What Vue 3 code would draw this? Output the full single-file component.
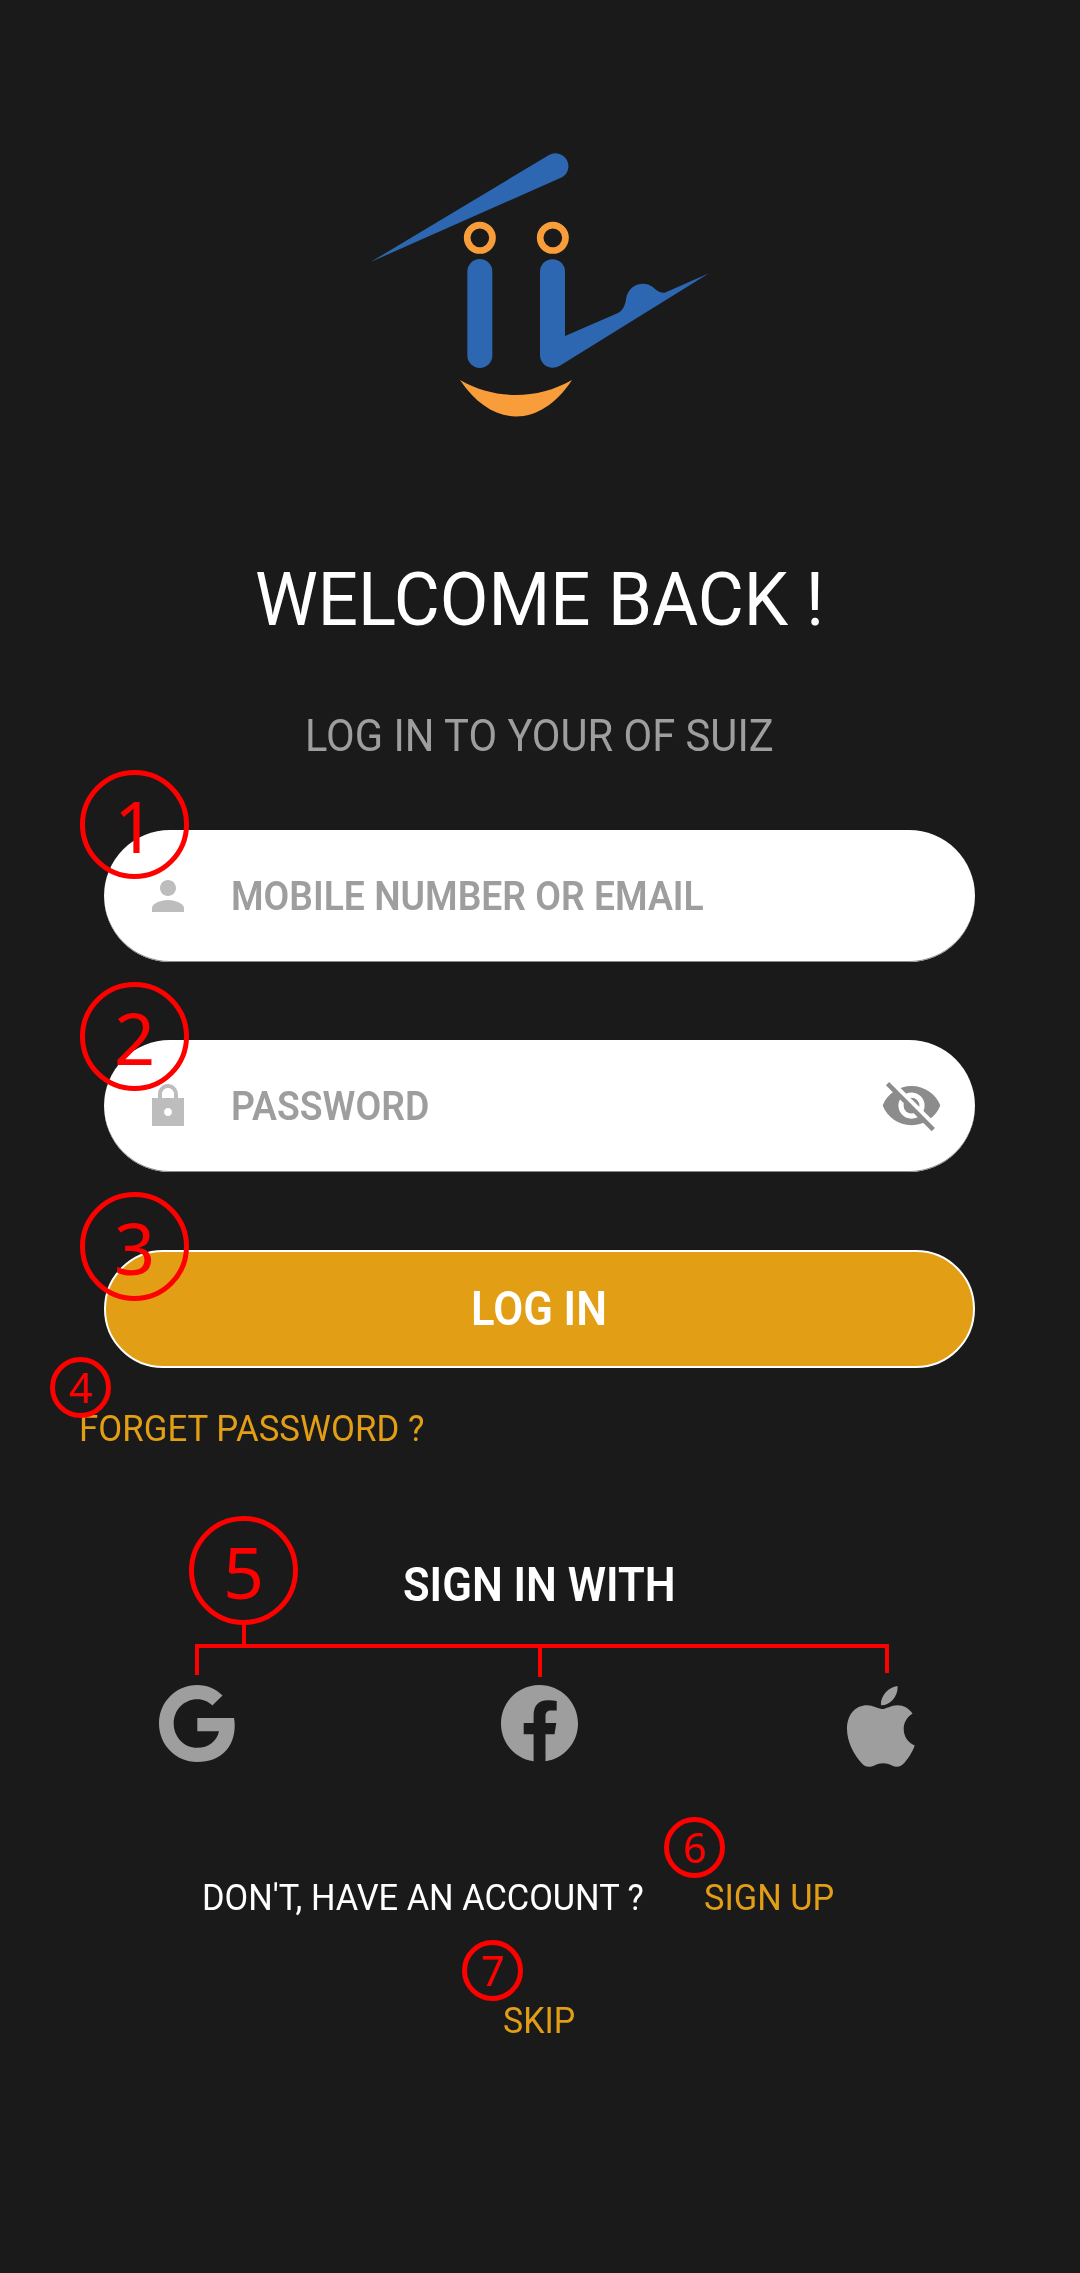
<script setup>
const fields = [
  { n: 1, label: 'MOBILE NUMBER OR EMAIL', icon: 'person', squeeze: 0.932, badge: 'top' },
  { n: 2, label: 'PASSWORD', icon: 'lock', squeeze: 0.934, badge: 'mid' },
]
const icons = {
  person: 'M12 12c2.21 0 4-1.79 4-4s-1.79-4-4-4-4 1.79-4 4 1.79 4 4 4zm0 2c-2.67 0-8 1.34-8 4v2h16v-2c0-2.66-5.33-4-8-4z',
  lock: 'M20 8h-3V6.21c0-2.61-1.91-4.94-4.51-5.19C9.51.74 7 3.08 7 6v2H4v14h16V8zm-8 9c-1.1 0-2-.9-2-2s.9-2 2-2 2 .9 2 2-.9 2-2 2zM9 8V6c0-1.66 1.34-3 3-3s3 1.34 3 3v2H9z',
}
</script>

<template>
  <main class="screen">
    <svg class="logo" viewBox="0 0 1140 930">
      <g fill="#2e67b1">
        <path d="M62 396 L597 75 A38.500 38.500 0 1 1 636 142 Z" />
        <rect x="352" y="387" width="75" height="327" rx="37.500" />
        <path d="M570 425 A37.500 37.500 0 0 1 645 425 V618 L804 549 C818 542 826 526 828 508 C832 478 854 461 880 461 C897 461 908 470 918 479 C926 486 936 489 944 488 L1077 430 L632 706 C604 724 570 706 570 676 Z" />
      </g>
      <g fill="none" stroke="#f99d3b" stroke-width="20">
        <circle cx="389.500" cy="323.500" r="38" />
        <circle cx="608.500" cy="323.500" r="38" />
      </g>
      <path fill="#f99d3b" d="M330 750 C435 810 560 810 666 750 C570 896 428 896 330 750 Z" />
    </svg>

    <h1 class="title"><span class="t">WELCOME BACK !</span></h1>
    <p class="subtitle"><span class="t">LOG IN TO YOUR OF SUIZ</span></p>

    <label v-for="f in fields" :key="f.n" class="field">
      <svg class="field-icon" viewBox="0 0 24 24"><path :d="icons[f.icon]" /></svg>
      <span class="t placeholder" :style="{ '--sx': f.squeeze }">{{ f.label }}</span>
      <svg v-if="f.icon === 'lock'" class="eye" viewBox="0 0 60 52">
        <mask id="eye-cut">
          <rect width="60" height="52" fill="#fff" />
          <path d="M4.500 -2.500 L54.500 47.500" stroke="#000" stroke-width="5" />
        </mask>
        <g mask="url(#eye-cut)">
          <path fill-rule="evenodd" d="M29.500 6 C16.400 6 5.200 14 0.700 25.500 C5.200 37 16.400 45.200 29.500 45.200 S53.800 37 58.300 25.500 C53.800 14 42.600 6 29.500 6 Z M29.500 12.500 A13.100 13.100 0 1 1 29.500 38.700 A13.100 13.100 0 1 1 29.500 12.500 Z" />
          <circle cx="29.500" cy="25.600" r="7.900" />
        </g>
        <path d="M5.500 3.700 L51.300 49.700" stroke="#8c8c8c" stroke-width="4.600" />
      </svg>
      <b class="badge" :class="f.badge">{{ f.n }}</b>
    </label>

    <button class="login">
      <span class="t">LOG IN</span>
      <b class="badge low">3</b>
    </button>

    <div class="forgot">
      <a class="t">FORGET PASSWORD ?</a>
      <b class="badge small">4</b>
    </div>

    <h2 class="signin"><span class="t">SIGN IN WITH</span></h2>

    <section class="socials">
      <svg class="google" viewBox="0 0 76 77">
        <path d="M63.500 10.500 L53.300 20.500 C49.500 16.800 44.500 14.300 38.300 14.300 C25 14.300 14.700 25 14.700 38.500 C14.700 52 25 62.800 38.300 62.800 C49.500 62.800 58 56 60 46.200 H38.300 V33 H75 C75.500 35.500 75.700 38 75.700 40.500 C75.700 62.500 61.500 77 38.300 77 C17 77 0 60 0 38.500 C0 17 17 0 38.300 0 C48 0 57 4 63.500 10.500 Z" />
      </svg>
      <svg class="facebook" viewBox="0 0 77 77">
        <path d="M32.600 76.300 V49.300 H22.700 V38 H32.600 V30.500 C32.600 20.500 37.500 15.200 46.500 15.200 C50 15.200 53 15.500 55.700 16 V25.500 H50.500 C46.300 25.500 44.500 27.500 44.500 31 V38 H55.300 L53.500 49.300 H44.500 V76.300 C63 73.500 77 57.800 77 38.500 C77 17.200 59.800 0 38.500 0 S0 17.200 0 38.500 C0 57.800 14 73.500 32.600 76.300 Z" />
      </svg>
      <svg class="apple" viewBox="0 0 68 81">
        <path d="M50.500 0 C51.500 9 44 19.500 34 19.300 C33 10.500 41.500 0.800 50.500 0 Z M65.500 27.500 C60 31 56.700 36.500 56.700 43 C56.700 50.500 61 56.500 67.700 59.500 C65.500 66 61 73 57 77.300 C53 81.500 49 81.500 45 79.500 C39 76.500 33 76.500 27.500 79.500 C22 82 18 81 14.500 77 C7 68.500 0 56 0 43 C0 28 9 19.300 20 19.300 C26 19.300 31 23 35 23 C39 23 44 19.200 50.500 19.200 C56.500 19.200 61.500 22 65.500 27.500 Z" />
      </svg>
      <svg class="bracket" viewBox="0 0 694 52">
        <path d="M2 50 V21 H692 V48 M345 21 V52 M49 0 V21" />
      </svg>
      <b class="badge five">5</b>
    </section>

    <div class="signup">
      <span class="t ask">DON'T, HAVE AN ACCOUNT ?</span>
      <a class="t join">SIGN UP</a>
      <b class="badge small">6</b>
    </div>

    <div class="skip">
      <a class="t">SKIP</a>
      <b class="badge small">7</b>
    </div>
  </main>
</template>

<style>
body {
  margin: 0;
  background: #1a1a1a;
}
</style>

<style scoped>
.screen {
  box-sizing: border-box;
  display: flex;
  flex-direction: column;
  width: 1080px;
  height: 2273px;
  padding-top: 130px;
  overflow: hidden;
  background: #1a1a1a;
  color: #fff;
  font-family: Roboto, 'Noto Sans', sans-serif;
}
h1, h2, p {
  margin: 0;
  font-weight: 400;
}
.t {
  display: inline-block;
  white-space: nowrap;
  transform: scaleX(var(--sx, 1));
  transform-origin: left center;
}
.logo {
  width: 380px;
  height: 310px;
  margin-left: 350px;
}
.title {
  --sx: 0.943;
  margin: 119px 0 0 255px;
  font-size: 75px;
  line-height: 80px;
}
.subtitle {
  --sx: 0.956;
  margin: 73px 0 0 305px;
  font-size: 43.600px;
  line-height: 50px;
  color: #9e9e9e;
}
.field {
  position: relative;
  display: flex;
  align-items: center;
  box-sizing: border-box;
  height: 132px;
  margin: 78px 105.400px 0 104.400px;
  padding: 0 33px 1px 39.600px;
  border-radius: 66px;
  background: #fff;
  box-shadow: inset 0 -1px 0 #8b8b8b;
}
.subtitle + .field {
  margin-top: 68px;
}
.field-icon {
  width: 48px;
  height: 48px;
  fill: #bdbdbd;
}
.placeholder {
  flex: 1;
  position: relative;
  top: 1px;
  margin-left: 38.800px;
  font-size: 40px;
  font-weight: 600;
  line-height: 48px;
  color: #9e9e9e;
}
.eye {
  width: 60px;
  height: 52px;
  overflow: visible;
  fill: #8c8c8c;
}
.login {
  --sx: 0.888;
  position: relative;
  display: flex;
  align-items: center;
  box-sizing: border-box;
  height: 118px;
  margin: 78px 105.400px 0 104.400px;
  padding: 0 0 0 364.900px;
  border: 2px solid #fff;
  border-radius: 60px;
  background: #e29e14;
  color: #fff;
  font: 600 49px/56px Roboto, sans-serif;
}
.forgot {
  --sx: 0.9545;
  position: relative;
  margin: 39px 0 0 79px;
  font-size: 36.500px;
  line-height: 44px;
  color: #e29e14;
}
.signin {
  --sx: 0.89;
  margin: 106px 0 0 402.500px;
  font-size: 49px;
  font-weight: 600;
  line-height: 56px;
}
.socials {
  position: relative;
  display: flex;
  justify-content: space-between;
  height: 82px;
  margin: 72px 165px 0 159px;
  fill: #9e9e9e;
}
.google {
  width: 76px;
  height: 77px;
}
.facebook {
  width: 77px;
  height: 77px;
  margin-left: -3px;
}
.apple {
  width: 68px;
  height: 81px;
  margin-top: 1px;
}
.bracket {
  position: absolute;
  left: 36px;
  top: -62px;
  width: 694px;
  height: 52px;
  margin-top: 2px;
  fill: none;
  stroke: #f00;
  stroke-width: 4;
}
.signup {
  --sx: 0.942;
  position: relative;
  display: flex;
  margin: 109px 0 0 202px;
  font-size: 36.500px;
  line-height: 44px;
}
.ask {
  width: 501.700px;
}
.join {
  color: #e29e14;
}
.skip {
  --sx: 0.93;
  position: relative;
  margin: 79px 0 0 503px;
  font-size: 36.500px;
  line-height: 44px;
  color: #e29e14;
}
.badge {
  position: absolute;
  box-sizing: border-box;
  width: 109px;
  height: 109px;
  border: 5px solid #f00;
  border-radius: 50%;
  color: #f00;
  font: 400 72px/101px 'Noto Sans', sans-serif;
  text-align: center;
}
.badge.top {
  left: -24.400px;
  top: -60px;
}
.badge.mid {
  left: -24.400px;
  top: -58px;
}
.badge.low {
  left: -26.400px;
  top: -60px;
}
.badge.five {
  left: 30px;
  top: -169px;
}
.badge.small {
  width: 61px;
  height: 61px;
  font-size: 41px;
  line-height: 51px;
}
.forgot .badge {
  left: -29px;
  top: -50px;
}
.signup .badge {
  left: 462px;
  top: -59px;
}
.skip .badge {
  left: -41px;
  top: -59px;
}
</style>
